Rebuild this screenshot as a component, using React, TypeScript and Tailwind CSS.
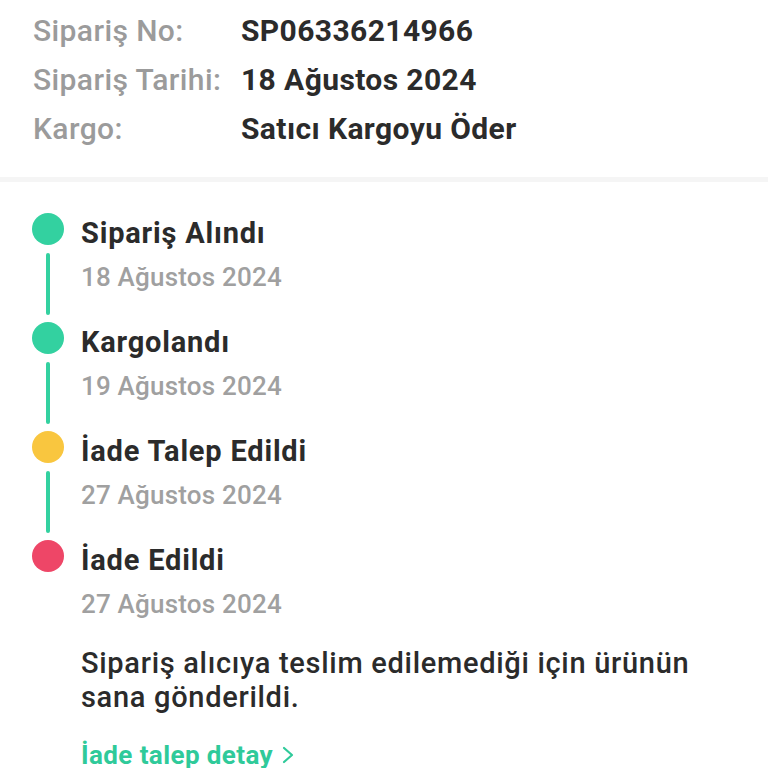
import React from "react";

const items = [
  { title: "Sipariş Alındı", date: "18 Ağustos 2024", color: "bg-[#33d1a0]", line: true },
  { title: "Kargolandı", date: "19 Ağustos 2024", color: "bg-[#33d1a0]", line: true },
  { title: "İade Talep Edildi", date: "27 Ağustos 2024", color: "bg-[#f9c63f]", line: true },
  { title: "İade Edildi", date: "27 Ağustos 2024", color: "bg-[#ee4667]", line: false },
];

export default function App() {
  return (
    <div className="w-[768px] h-[768px] overflow-hidden bg-white font-['Roboto',sans-serif]">
      <div className="pl-[33px] pt-[6px] h-[177px]">
        {[
          ["Sipariş No:", "SP06336214966"],
          ["Sipariş Tarihi:", "18 Ağustos 2024"],
          ["Kargo:", "Satıcı Kargoyu Öder"],
        ].map(([l, v]) => (
          <div key={l} className="flex h-[49px] items-center text-[30px] leading-[49px] tracking-[0.4px]">
            <span className="w-[208px] font-medium text-[#9b9b9b]">{l}</span>
            <span className="font-bold text-[#2b2b2b]">{v}</span>
          </div>
        ))}
      </div>
      <div className="h-[5px] bg-[#f5f5f5]" />
      <div className="pl-[32px] pt-[31px]">
        {items.map((it) => (
          <div key={it.title} className="flex gap-[17px]">
            <div className="flex w-8 flex-col items-center">
              <div className={`h-8 w-8 shrink-0 rounded-full ${it.color}`} />
              {it.line && <div className="mt-2 mb-[7px] h-[62px] w-1 rounded-full bg-[#33d1a0]" />}
            </div>
            <div className="flex flex-col">
              <div className="mt-[1px] text-[29px] leading-[38px] font-bold tracking-[0.8px] text-[#2b2b2b]">{it.title}</div>
              <div className="mt-[9px] text-[26px] leading-[32px] font-medium tracking-[0.2px] text-[#a0a0a0]">{it.date}</div>
              {!it.line && (
                <>
                  <div className="mt-[26px] max-w-[640px] text-[29px] leading-[34px] font-medium tracking-[0.7px] text-[#2b2b2b]">
                    Sipariş alıcıya teslim edilemediği için ürünün sana gönderildi.
                  </div>
                  <div className="mt-[25px] flex items-center gap-[8px] text-[26px] leading-[32px] font-bold text-[#2fca9a]">
                    <span className="tracking-[0.4px]">İade talep detay</span>
                    <svg width="14" height="20" viewBox="0 0 14 20" fill="none">
                      <path d="M3 3l8 7-8 7" stroke="#2fca9a" strokeWidth="2.2" strokeLinecap="round" strokeLinejoin="round" />
                    </svg>
                  </div>
                </>
              )}
            </div>
          </div>
        ))}
      </div>
    </div>
  );
}
